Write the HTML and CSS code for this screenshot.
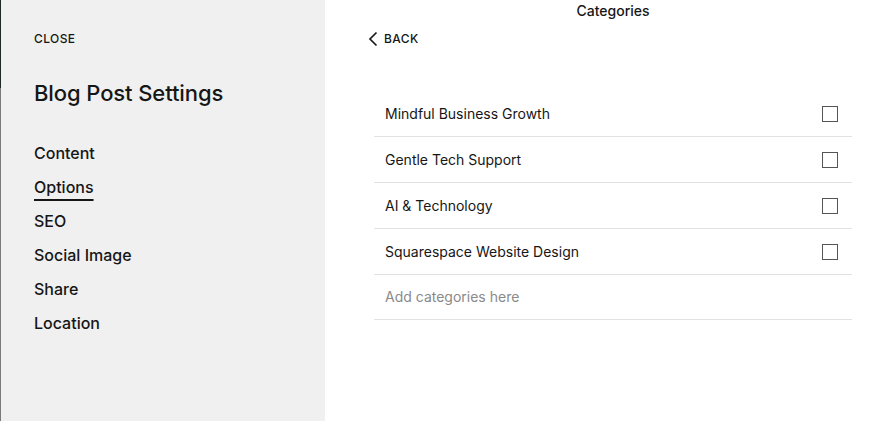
FILE: index.html
```html
<!DOCTYPE html>
<html>
<head>
<meta charset="utf-8">
<link rel="stylesheet" href="styles.css">
</head>
<body>
<div class="app">
  <aside class="sidebar">
    <div class="edge"><div class="edge-top"></div><div class="edge-bottom"></div></div>
    <div class="side-inner">
      <div class="close">CLOSE</div>
      <h1 class="title">Blog Post Settings</h1>
      <nav class="nav">
        <div class="nav-item">Content</div>
        <div class="nav-item active">Options</div>
        <div class="nav-item">SEO</div>
        <div class="nav-item">Social Image</div>
        <div class="nav-item">Share</div>
        <div class="nav-item">Location</div>
      </nav>
    </div>
  </aside>
  <main class="main">
    <div class="panel">
      <div class="panel-title">Categories</div>
      <div class="back">
        <svg class="chev" width="10" height="16" viewBox="0 0 10 16"><path d="M8.5 1.5 L2 8 L8.5 14.5" fill="none" stroke="#1a1a1a" stroke-width="1.7"/></svg>
        <span>BACK</span>
      </div>
      <ul class="list">
        <li class="row"><span>Mindful Business Growth</span><span class="box"></span></li>
        <li class="row"><span>Gentle Tech Support</span><span class="box"></span></li>
        <li class="row"><span>AI &amp; Technology</span><span class="box"></span></li>
        <li class="row"><span>Squarespace Website Design</span><span class="box"></span></li>
        <li class="row placeholder"><span>Add categories here</span></li>
      </ul>
    </div>
  </main>
</div>
</body>
</html>
```

FILE: styles.css
```css
* { box-sizing: border-box; }
html, body { margin: 0; padding: 0; }
body {
  width: 889px;
  height: 421px;
  overflow: hidden;
  font-family: Inter, "Liberation Sans", sans-serif;
  color: #161616;
  background: #fff;
}
.app { display: flex; height: 421px; }
.sidebar {
  width: 325px;
  background: #f0f0f0;
  display: flex;
}
.edge { width: 1px; display: flex; flex-direction: column; }
.edge-top { height: 88px; background: #1e2a23; }
.edge-bottom { flex: 1; background: #7a7a7a; }
.side-inner { padding: 31px 0 0 33px; }
.close {
  font-size: 12px;
  font-weight: 500;
  letter-spacing: 0.4px;
  line-height: 15px;
}
.title {
  margin: 32px 0 0;
  font-size: 22px;
  font-weight: 500;
  line-height: 30px;
  letter-spacing: -0.1px;
}
.nav { margin-top: 34px; display: flex; flex-direction: column; gap: 12px; }
.nav-item {
  font-size: 16px;
  font-weight: 500;
  line-height: 22px;
  align-self: flex-start;
}
.nav-item.active {
  text-decoration: underline;
  text-decoration-thickness: 2px;
  text-underline-offset: 6px;
}
.main { flex: 1; }
.panel { width: 478px; margin-left: 49px; }
.panel-title {
  text-align: center;
  font-size: 14px;
  font-weight: 500;
  line-height: 18px;
  padding-top: 2px;
}
.back {
  display: flex;
  align-items: center;
  gap: 6px;
  margin-top: 9px;
  margin-left: -6px;
  font-size: 12px;
  font-weight: 500;
  letter-spacing: 0.4px;
  line-height: 18px;
}
.back span { padding-top: 1px; }
.list { list-style: none; margin: 43px 0 0; padding: 0; }
.row {
  display: flex;
  justify-content: space-between;
  align-items: center;
  height: 46px;
  padding: 0 14px 0 11px;
  border-bottom: 1px solid #e2e2e2;
  font-size: 14px;
  line-height: 18px;
}
.row.placeholder { color: #8a8a8a; height: 45px; }
.box {
  width: 16px;
  height: 16px;
  border: 1.5px solid #555;
}
```
